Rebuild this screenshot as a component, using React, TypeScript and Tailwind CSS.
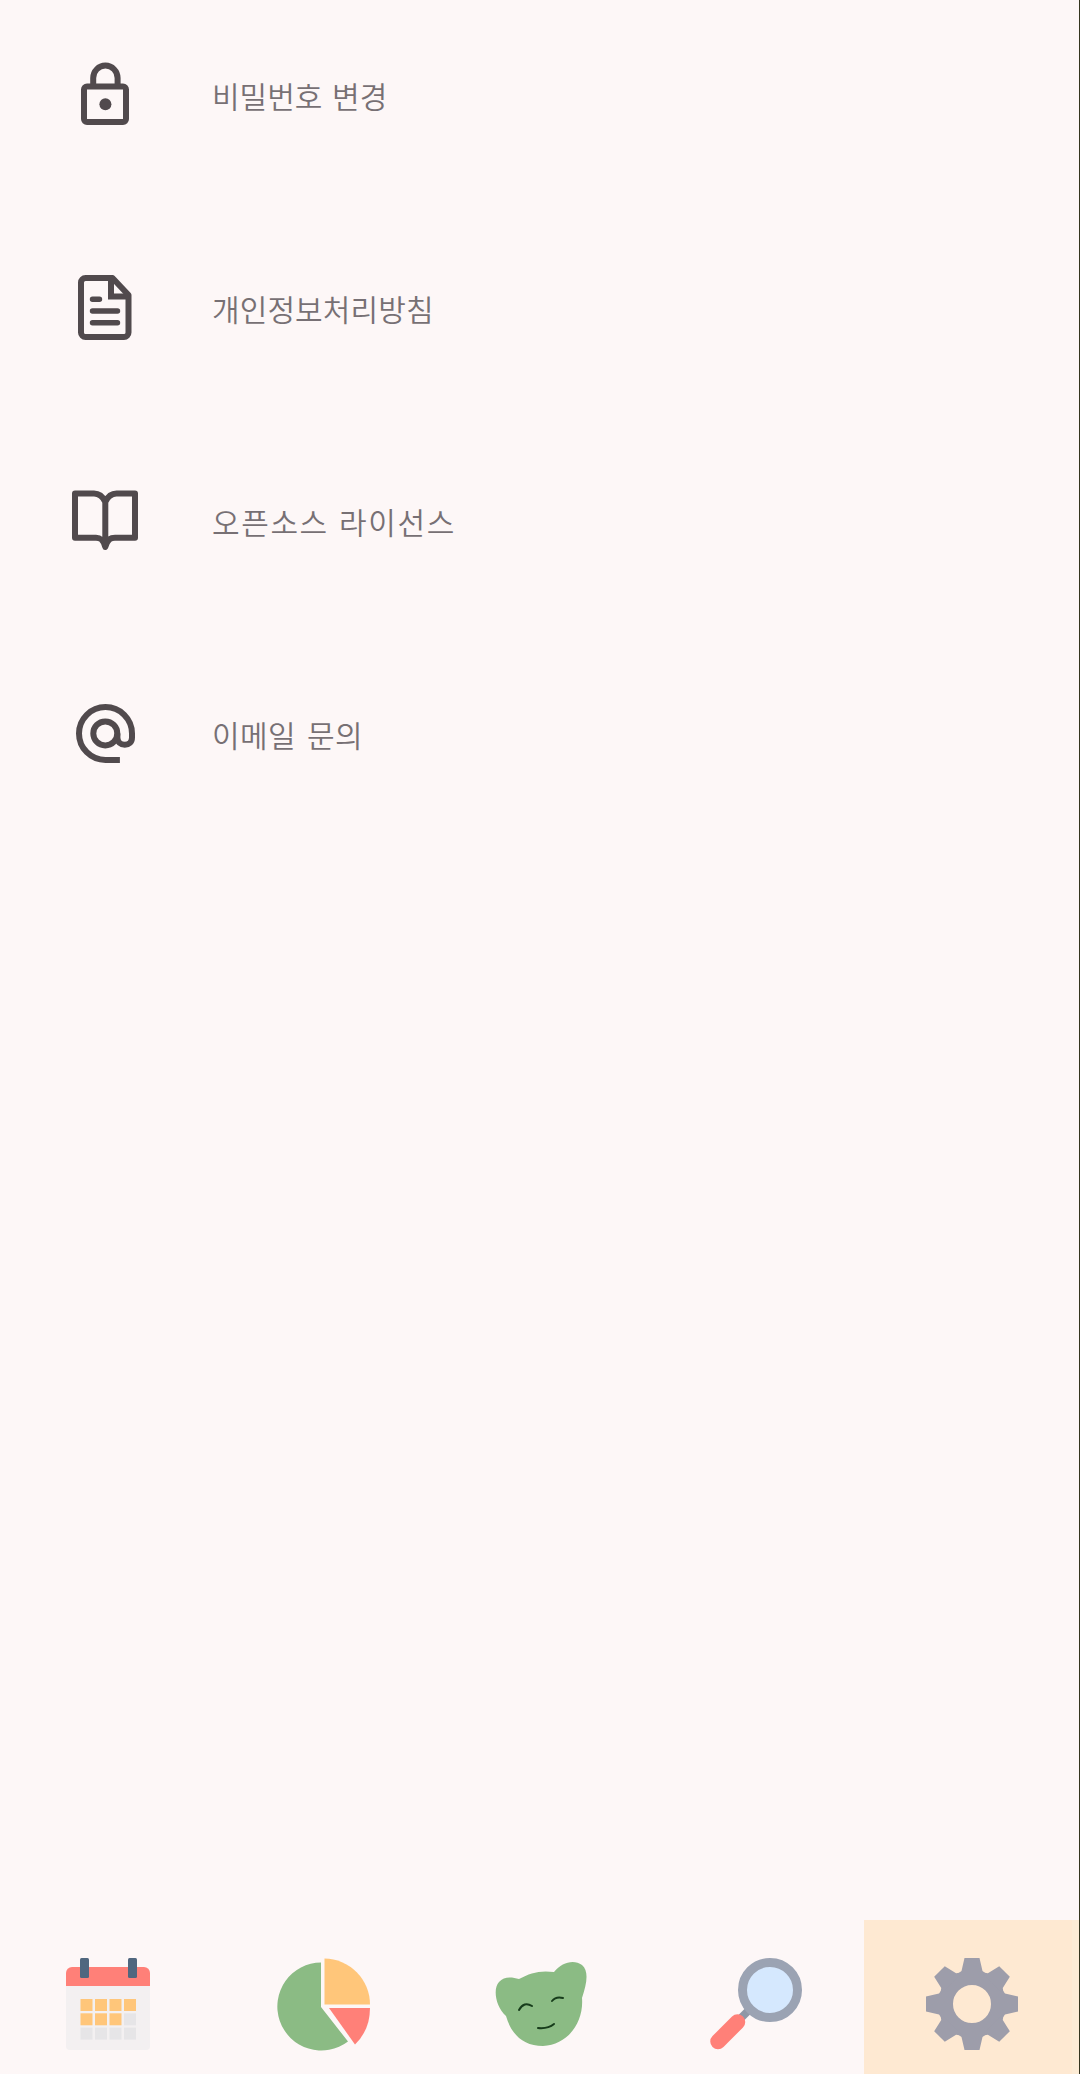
import React from "react";

const ink = "#514a4d";

function LockIcon() {
  return (
    <svg viewBox="0 0 80 80" className="size-20" fill="none" stroke={ink} strokeWidth="6">
      <rect x="19" y="31.5" width="42" height="35.5" rx="3" />
      <path d="M28.2 31V23a12.200 12.400 0 0 1 24.400 0v8" />
      <circle cx="40.400" cy="49.300" r="6" fill={ink} stroke="none" />
    </svg>
  );
}

function DocumentIcon() {
  return (
    <svg viewBox="0 0 80 80" className="size-20" fill="none" stroke={ink} strokeWidth="6" strokeLinejoin="round">
      <path d="M47.5 10H20.5a4.5 4.5 0 0 0-4.5 4.5v50a4.500 4.500 0 0 0 4.500 4.500H59a4.500 4.500 0 0 0 4.500-4.500V27Z" />
      <path d="M46 10V28.500H64" strokeLinejoin="miter" />
      <path d="M27.500 31.300H34.500M27.500 43H52.500M27.500 54.800H52.500" strokeWidth="5.400" strokeLinecap="round" />
    </svg>
  );
}

function BookIcon() {
  return (
    <svg viewBox="0 0 80 80" className="size-20" fill="none" stroke={ink} strokeWidth="6" strokeLinejoin="round">
      <path d="M40.300 21C38 16 34 12.600 29 12.600H10V56.700H31C35 56.700 38 58 40.300 66C42.600 58 45.600 56.700 50 56.700H70V12.600H51.500C46.500 12.600 42.600 16 40.300 21V66" />
    </svg>
  );
}

function AtIcon() {
  return (
    <svg viewBox="0 0 80 80" className="size-20" fill="none" stroke={ink} strokeWidth="6">
      <circle cx="40.300" cy="39.400" r="12" />
      <path d="M54.900 66H40.500A26.500 26.500 0 1 1 67 39.500V43.500C67 48 64 50.700 59.800 50.700S52.400 48 52.400 43.500V39.400" />
    </svg>
  );
}

const dayCells = [0, 1, 2, 3].flatMap((c) => [0, 1, 2].map((r) => ({ c, r })));

function CalendarIcon() {
  return (
    <svg viewBox="0 0 96 96" className="size-24">
      <path d="M6 28H90V90a4 4 0 0 1-4 4H10a4 4 0 0 1-4-4Z" fill="#f3f0f1" />
      <path d="M6 30V17a6 6 0 0 1 6-6H84a6 6 0 0 1 6 6V30Z" fill="#ff8078" />
      <rect x="20" y="2" width="9" height="20" rx="1.500" fill="#50677f" />
      <rect x="68" y="2" width="9" height="20" rx="1.500" fill="#50677f" />
      {dayCells.map(({ c, r }) => (
        <rect
          key={`${c}-${r}`}
          x={20.5 + c * 14.5}
          y={43 + r * 14.3}
          width="12"
          height="12"
          fill={r === 2 || (r === 1 && c === 3) ? "#e6e5e7" : "#ffc67a"}
        />
      ))}
    </svg>
  );
}

function PieIcon() {
  return (
    <svg viewBox="0 0 96 96" className="size-24">
      <path d="M45 6.500V51L72 85.500A44 44 0 1 1 45 6.500Z" fill="#8bbb84" />
      <path d="M48.500 2.500A46 46 0 0 1 94 48.500H48.500Z" fill="#ffc67a" />
      <path d="M53 52H94Q94 74 79 88.500Z" fill="#ff8078" />
    </svg>
  );
}

function BearIcon() {
  return (
    <svg viewBox="0 0 96 96" className="size-24">
      <path
        d="M27 23C38 17 48 14 62 16C70 6 82 3 90 9C97 15 95 27 90 42C92 66 76 89 51 90C31 90 19 78 14 60C3 50 1 32 7 26C12 20 20 21 27 23Z"
        fill="#8bbb84"
      />
      <g fill="none" stroke="#173c1b" strokeWidth="2" strokeLinecap="round">
        <path d="M27 54Q32 45 40 50" />
        <path d="M60 45Q64 40 71 42" />
        <path d="M46 72Q56 73 62 68" />
      </g>
    </svg>
  );
}

function SearchIcon() {
  return (
    <svg viewBox="0 0 96 96" className="size-24">
      <path d="M42 53L30 65" stroke="#8f97a6" strokeWidth="8" />
      <path d="M29.500 66L10 85.500" stroke="#ff8078" strokeWidth="15.500" strokeLinecap="round" />
      <circle cx="62" cy="34" r="27.500" fill="#d5e8fe" stroke="#9ba3b3" strokeWidth="9" />
    </svg>
  );
}

const gearAngles = [0, 45, 90, 135, 180, 225, 270, 315];

function GearIcon() {
  return (
    <svg viewBox="0 0 96 96" className="size-24" fill="#9d9daa">
      <circle cx="48" cy="48" r="26" fill="none" stroke="#9d9daa" strokeWidth="14" />
      {gearAngles.map((a) => (
        <path key={a} d="M40.500 2H55.500L58.500 15L64 19H32L37.500 15Z" transform={`rotate(${a} 48 48)`} />
      ))}
    </svg>
  );
}

const settings = [
  { label: "비밀번호 변경", Icon: LockIcon, spacing: "[word-spacing:3px]" },
  { label: "개인정보처리방침", Icon: DocumentIcon, spacing: "tracking-[0.1px]" },
  { label: "오픈소스 라이선스", Icon: BookIcon, spacing: "tracking-[1.6px] [word-spacing:2px]" },
  { label: "이메일 문의", Icon: AtIcon, spacing: "tracking-[0.4px] [word-spacing:4px]" },
];

const tabs = [
  { name: "calendar", Icon: CalendarIcon },
  { name: "statistics", Icon: PieIcon },
  { name: "home", Icon: BearIcon },
  { name: "search", Icon: SearchIcon },
  { name: "settings", Icon: GearIcon, active: true },
];

export default function App() {
  return (
    <div className="flex h-[2074px] w-[1080px] flex-col overflow-hidden border-r border-[#34351f] bg-[#fdf7f7] font-['Noto_Sans_CJK_KR',sans-serif]">
      <main className="flex flex-1 flex-col gap-[133px] pt-[55px] pl-[65px]">
        {settings.map(({ label, Icon, spacing }) => (
          <button key={label} className="flex h-20 items-center gap-[67px] text-left">
            <Icon />
            <span className={`text-[30px] leading-10 font-[350] whitespace-nowrap text-[#777074] ${spacing}`}>
              {label}
            </span>
          </button>
        ))}
      </main>
      <nav className="grid h-[154px] w-[1080px] shrink-0 grid-cols-5">
        {tabs.map(({ name, Icon, active }) => (
          <button
            key={name}
            aria-label={name}
            className={
              active
                ? "flex justify-center border-r-8 border-[#fcecd6] bg-[#fee9d2] pt-9 pl-2"
                : "flex justify-center pt-9"
            }
          >
            <Icon />
          </button>
        ))}
      </nav>
    </div>
  );
}
